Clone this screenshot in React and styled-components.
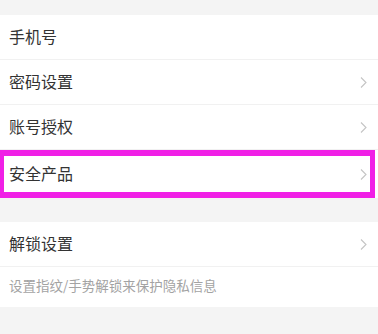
import React from "react";
import styled, { createGlobalStyle } from "styled-components";

const Global = createGlobalStyle`
  html, body { margin: 0; padding: 0; background: #f4f4f4; }
  body { font-family: "Noto Sans CJK SC", "Noto Sans", sans-serif; }
`;

const Page = styled.div`
  width: 378px;
  height: 334px;
  background: #f4f4f4;
  padding-top: 15px;
  box-sizing: border-box;
  display: flex;
  flex-direction: column;
  overflow: hidden;
`;

const Group = styled.div`
  background: #fff;
  display: flex;
  flex-direction: column;
  margin-bottom: ${(p) => p.$gap || 0}px;
`;

const Row = styled.div`
  position: relative;
  height: ${(p) => p.$h || 45}px;
  display: flex;
  align-items: center;
  justify-content: space-between;
  padding: 0 11px 2px 9px;
  box-sizing: border-box;
  border-bottom: ${(p) => (p.$last ? "none" : "1px solid #f1f1f1")};
  flex-shrink: 0;
`;

const Label = styled.span`
  font-size: 16px;
  color: #333;
  line-height: 1;
`;

const Hint = styled.span`
  font-size: 13.5px;
  color: #a3a3a3;
  line-height: 1;
`;

const Highlight = styled.div`
  position: absolute;
  left: 0;
  top: 0;
  right: 3px;
  bottom: 0;
  border-style: solid;
  border-color: #f01fe6;
  border-width: 6px 5px 6px 4px;
  pointer-events: none;
`;

const Chevron = () => (
  <svg width="7" height="11" viewBox="0 0 7 11" style={{ display: "block", marginTop: 2 }}>
    <polyline points="1,0.5 6,5.5 1,10.5" fill="none" stroke="#c4c4c4" strokeWidth="1.1" />
  </svg>
);

export default function App() {
  return (
    <>
      <Global />
      <Page>
        <Group $gap={24}>
          <Row>
            <Label>手机号</Label>
          </Row>
          <Row>
            <Label>密码设置</Label>
            <Chevron />
          </Row>
          <Row>
            <Label>账号授权</Label>
            <Chevron />
          </Row>
          <Row $h={48} $last>
            <Label>安全产品</Label>
            <Chevron />
            <Highlight />
          </Row>
        </Group>
        <Group>
          <Row $h={45}>
            <Label>解锁设置</Label>
            <Chevron />
          </Row>
          <Row $h={40} $last>
            <Hint>设置指纹/手势解锁来保护隐私信息</Hint>
          </Row>
        </Group>
      </Page>
    </>
  );
}
